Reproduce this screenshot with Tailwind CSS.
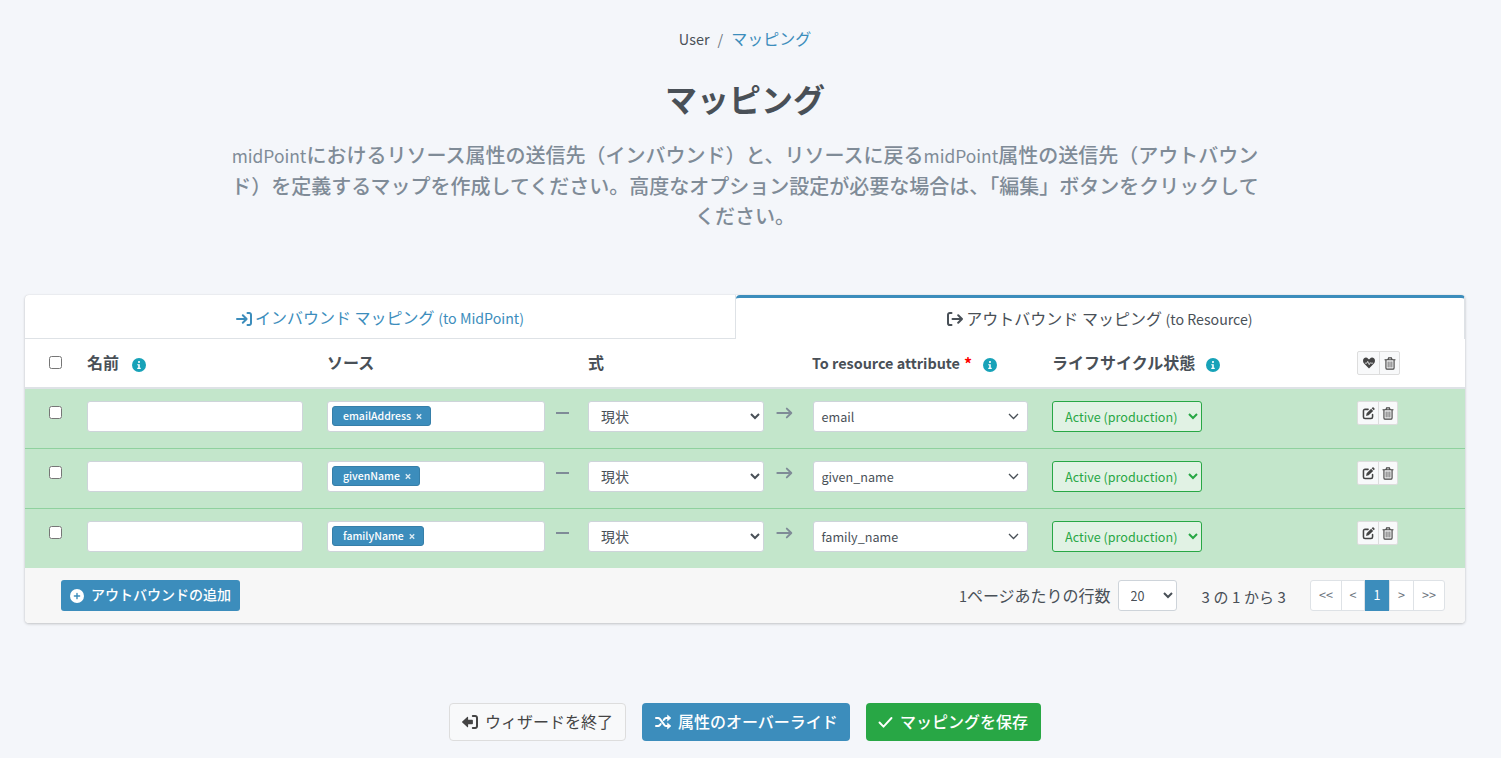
<!DOCTYPE html>
<html lang="ja">
<head>
<meta charset="utf-8">
<title>マッピング</title>
<script src="https://cdn.jsdelivr.net/npm/@tailwindcss/browser@4"></script>
</head>
<body class="h-[758px] overflow-hidden bg-[#f4f6fa] font-['Noto_Sans_CJK_JP',sans-serif] text-base leading-6 text-[#495057]">
<svg class="hidden">
  <symbol id="info" viewBox="0 0 16 16"><circle cx="8" cy="8" r="8" fill="#17a2b8"/><circle cx="8" cy="4.6" r="1.2" fill="#fff"/><path d="M6 7h2.9v4.2H10v1.3H6v-1.3h1.1V8.3H6z" fill="#fff"/></symbol>
  <symbol id="trash" viewBox="0 0 14 16"><path d="M.8 3.400h12.400M4.400 3.200l.9-2.200h3.400l.9 2.200M2 3.600v9.800c0 .9.700 1.600 1.600 1.600h6.800c.9 0 1.600-.7 1.600-1.600V3.600" fill="none" stroke="currentColor" stroke-width="1.400" stroke-linecap="round"/><path d="M4.700 6v6.400M7 6v6.400M9.300 6v6.400" fill="none" stroke="currentColor" stroke-width="1" stroke-linecap="round"/></symbol>
  <symbol id="edit" viewBox="0 0 16 16"><path d="M7.500 2.900H3.700A1.900 1.900 0 0 0 1.800 4.800v7.400a1.900 1.900 0 0 0 1.900 1.900h7.400a1.900 1.900 0 0 0 1.900-1.900V9.300" fill="none" stroke="currentColor" stroke-width="1.900" stroke-linecap="round"/><path d="M5 11l.7-3.200 5.500-5.500 2.500 2.500-5.500 5.500zM11.900 1.600l.8-.8c.5-.5 1.200-.5 1.700 0l.8.8c.5.500.5 1.200 0 1.700l-.8.8z" fill="currentColor"/></symbol>
  <symbol id="heart" viewBox="0 0 16 16"><path d="M8 15.200L1.400 8.500C-.5 6.500-.4 3.200 1.400 1.700c1.700-1.400 4-1.100 5.500.5l1.100 1.100 1.100-1.100c1.500-1.600 3.800-1.900 5.500-.5 1.800 1.500 1.900 4.800 0 6.800z" fill="currentColor"/><path d="M2.500 8.200h2.700l1.100-2.400 2 4.400 1.400-2.700.5.700h3.300" fill="none" stroke="#f8f9fa" stroke-width="1"/></symbol>
  <symbol id="arrow" viewBox="0 0 16 12"><path d="M.8 6h13.800M10.300 1.600L14.800 6l-4.500 4.400" fill="none" stroke="currentColor" stroke-width="1.900" stroke-linecap="round" stroke-linejoin="round"/></symbol>
</svg>

<nav class="flex h-6 mt-[27px] items-center justify-center pr-[11px] whitespace-nowrap">
  <span class="text-[14.4px]">User</span><span class="px-2 text-[14.4px] text-[#6c757d]">/</span><span class="pb-0.5 text-[#3c8dbc]">マッピング</span>
</nav>
<h1 class="mt-[27px] pr-[11px] text-center text-[32px] leading-10 font-bold">マッピング</h1>
<p class="mt-[22px] h-[90px] pr-[11px] text-center text-xl leading-[30px] font-medium whitespace-nowrap text-[#7f8b97]"><span class="text-[17.4px] font-normal">midPoint</span>におけるリソース属性の送信先（インバウンド）と、リソースに戻る<span class="text-[17.4px] font-normal">midPoint</span>属性の送信先（アウトバウン<br>ド）を定義するマップを作成してください。高度なオプション設定が必要な場合は、「編集」ボタンをクリックして<br>ください。</p>

<main class="mt-[65px] ml-[25px] w-[1440px] rounded bg-white shadow-[0_0_1px_rgba(0,0,0,.125),0_1px_3px_rgba(0,0,0,.2)]">
  <div class="flex h-11 whitespace-nowrap">
    <div class="flex w-[711px] items-center justify-center border-r border-b border-[#dee2e6] pt-1 text-[#3c8dbc]">
      <svg class="mr-[3px] h-4 w-4" viewBox="0 0 16 16" fill="none" stroke="currentColor" stroke-width="2" stroke-linecap="round" stroke-linejoin="round"><path d="M1 8h9.500M6.800 4.200L10.600 8l-3.800 3.800M11.500 2h1.700A1.800 1.800 0 0 1 15 3.800v8.400a1.800 1.800 0 0 1-1.800 1.800h-1.700"/></svg>
      <span class="pb-0.5">インバウンド マッピング <span class="text-[14.2px]">(to MidPoint)</span></span>
    </div>
    <div class="flex flex-1 items-center justify-center rounded-t border-t-3 border-r border-t-[#3c8dbc] border-r-[#dee2e6]">
      <svg class="mr-[3px] h-4 w-4" viewBox="0 0 16 16" fill="none" stroke="currentColor" stroke-width="2" stroke-linecap="round" stroke-linejoin="round"><path d="M5.500 8H15M11.200 4.200L15 8l-3.800 3.800M4.500 2H2.800A1.800 1.800 0 0 0 1 3.800v8.400A1.800 1.800 0 0 0 2.800 14h1.700"/></svg>
      <span class="pb-px">アウトバウンド マッピング <span class="text-[14.2px]">(to Resource)</span></span>
    </div>
  </div>

  <div class="grid h-[50px] grid-cols-[62px_240px_261px_224px_240px_305px_1fr] items-center border-b-2 border-[#dee2e6] font-bold whitespace-nowrap">
    <input type="checkbox" class="mb-0.5 ml-6 h-[13px] w-[13px]">
    <div class="flex items-center"><span class="pb-0.5">名前</span><svg class="mt-1 ml-[13px] h-[14px] w-[14px]"><use href="#info"/></svg></div>
    <div class="pb-0.5">ソース</div>
    <div class="pb-0.5">式</div>
    <div class="flex items-center text-[14.4px]">To resource attribute<span class="ml-1 text-base text-[#f00]">*</span><svg class="mt-1 ml-[11px] h-[14px] w-[14px]"><use href="#info"/></svg></div>
    <div class="flex items-center"><span class="pb-0.5">ライフサイクル状態</span><svg class="mt-1 ml-[11px] h-[14px] w-[14px]"><use href="#info"/></svg></div>
    <div class="flex h-6 w-[43px] divide-x divide-[#ddd] rounded-xs border border-[#ddd] bg-[#f8f9fa] text-[#444]">
      <div class="flex w-[22px] items-center justify-center"><svg class="h-3 w-3"><use href="#heart"/></svg></div>
      <div class="flex flex-1 items-center justify-center"><svg class="h-[13px] w-[12px]"><use href="#trash"/></svg></div>
    </div>
  </div>

  <div id="rows" class="divide-y divide-[#8fd19e] bg-[#c3e6cb]"></div>

  <div class="flex h-[55px] items-start rounded-b bg-[#f7f7f7] pt-3 pr-5 pl-9 whitespace-nowrap">
    <button class="flex h-[31px] w-[179px] items-center rounded-[3px] bg-[#3c8dbc] pl-[9px] text-sm font-medium text-white">
      <svg class="mr-[7px] h-[14px] w-[14px]" viewBox="0 0 16 16"><circle cx="8" cy="8" r="8" fill="#fff"/><path d="M8 5v6M5 8h6" stroke="#3c8dbc" stroke-width="1.600" stroke-linecap="round"/></svg><span class="pb-1">アウトバウンドの追加</span></button>
    <div class="ml-auto flex items-start">
      <span class="mt-[3px]"><span class="text-[14.4px]">1</span>ページあたりの行数</span>
      <select class="mr-px ml-[7px] h-[31px] w-[59px] rounded-[3px] border border-[#ced4da] bg-white pl-2 text-[12.6px]"><option>20</option></select>
      <span class="mt-[5px] ml-6 text-[15px] tracking-[.1px]">3 の 1 から 3</span>
      <div class="ml-6 flex h-[31px] w-[135px] divide-x divide-[#dee2e6] rounded-[3px] border border-[#dee2e6] bg-white text-[12.6px] leading-7 text-[#6c757d]">
        <span class="w-[31px] text-center">&lt;&lt;</span><span class="w-[23px] text-center">&lt;</span><span class="-my-px w-[25px] bg-[#3c8dbc] pt-px text-center text-white">1</span><span class="w-6 text-center">&gt;</span><span class="flex-1 text-center">&gt;&gt;</span>
      </div>
    </div>
  </div>
</main>

<footer class="mt-20 flex h-[38px] gap-4 pl-[449px] font-medium whitespace-nowrap">
  <button class="flex w-[177px] items-center rounded border border-[#ddd] bg-[#f8f9fa] pl-3 font-normal text-[#444]">
    <svg class="mr-[7px] h-4 w-4" viewBox="0 0 16 16"><path d="M.3 7.400L5.200 2.900c.4-.4.9-.1.900.4v2.500h4c.5 0 .8.3.8.800v2.800c0 .5-.3.8-.8.800h-4v2.500c0 .5-.5.8-.9.400L.3 8.600c-.4-.4-.4-.8 0-1.200z" fill="currentColor"/><path d="M10.800 2h2.400A1.800 1.800 0 0 1 15 3.800v8.400a1.800 1.800 0 0 1-1.800 1.800h-2.400" fill="none" stroke="currentColor" stroke-width="2" stroke-linecap="round"/></svg><span class="pb-0.5">ウィザードを終了</span></button>
  <button class="flex w-[208px] items-center rounded bg-[#3c8dbc] pl-[13px] text-white">
    <svg class="mr-[7px] h-4 w-4" viewBox="0 0 16 16"><path d="M1 4h2.200c.6 0 1.100.3 1.500.7l5 6.600c.4.500.9.700 1.500.700H13M1 12h2.200c.6 0 1.100-.3 1.500-.7l1-1.300M8.700 6l1-1.300c.4-.4.9-.7 1.500-.7H13" fill="none" stroke="currentColor" stroke-width="2" stroke-linecap="round"/><path d="M12.500 1v6L16 4zM12.500 9v6l3.500-3z" fill="currentColor" stroke="currentColor" stroke-width=".5" stroke-linejoin="round"/></svg><span class="pb-0.5">属性のオーバーライド</span></button>
  <button class="flex w-[175px] items-center rounded bg-[#28a745] pl-3 text-white">
    <svg class="mr-[7px] h-4 w-[15px]" viewBox="0 0 15 16"><path d="M1.500 8.500l4 4.200L13.500 4" fill="none" stroke="currentColor" stroke-width="1.900" stroke-linecap="round" stroke-linejoin="round"/></svg><span class="pb-0.5">マッピングを保存</span></button>
</footer>

<template id="row">
  <div class="grid h-[60px] last:h-[59px] grid-cols-[62px_240px_261px_224px_240px_305px_1fr] items-start pt-3 whitespace-nowrap">
    <input type="checkbox" class="mt-[5px] ml-6 h-[13px] w-[13px]">
    <input type="text" class="h-[31px] w-[216px] rounded-[3px] border border-[#ced4da] bg-white">
    <div class="flex">
      <div class="flex h-[31px] w-[218px] items-start rounded-[3px] border border-[#ced4da] bg-white pt-1 pl-1">
        <span class="flex h-5 items-center rounded-[3px] border border-[#367fa9] bg-[#3c8dbc] pr-2 pl-[10px] text-[10.500px] font-medium text-white"><span data-f="source"></span>
          <svg class="mt-px ml-[5px] h-[7px] w-[6px]" viewBox="0 0 6 7"><path d="M.8 1.300l4.400 4.400M5.200 1.300L.8 5.700" stroke="#d8e8f1" stroke-width="1.500"/></svg></span>
      </div>
      <span class="mt-[11px] ml-[11px] h-[2px] w-[13px] bg-[#7f8b97]"></span>
    </div>
    <div class="flex">
      <select class="h-[31px] w-[176px] rounded-[3px] border border-[#ced4da] bg-white pb-0.5 pl-2 text-sm"><option>現状</option></select>
      <svg class="mt-[6px] ml-3 h-3 w-[17px] text-[#7f8b97]"><use href="#arrow"/></svg>
    </div>
    <div class="ml-px flex h-[31px] w-[215px] items-center justify-between rounded-[3px] border border-[#ced4da] bg-white pr-2 pl-[7.500px] text-[12.600px]"><span class="pt-px" data-f="attr"></span>
      <svg class="h-[7px] w-[11px]" viewBox="0 0 11 7"><path d="M1 1l4.500 4.500L10 1" fill="none" stroke="currentColor" stroke-width="1.300"/></svg></div>
    <select class="h-[31px] w-[150px] rounded-[3px] border border-[#28a745] bg-[#e1f2e4] pl-2 text-[12.600px] text-[#28a745]"><option>Active (production)</option></select>
    <div class="flex h-6 w-[41px] divide-x divide-[#ddd] rounded-xs border border-[#ddd] bg-[#f8f9fa] text-[#444]">
      <div class="flex w-[21px] items-center justify-center"><svg class="h-[13px] w-[13px]"><use href="#edit"/></svg></div>
      <div class="flex flex-1 items-center justify-center"><svg class="h-[13px] w-[12px]"><use href="#trash"/></svg></div>
    </div>
  </div>
</template>
<script>
  const rows = [['emailAddress', 'email'], ['givenName', 'given_name'], ['familyName', 'family_name']];
  for (const [source, attr] of rows) {
    const row = document.getElementById('row').content.cloneNode(true);
    row.querySelector('[data-f=source]').textContent = source;
    row.querySelector('[data-f=attr]').textContent = attr;
    document.getElementById('rows').append(row);
  }
</script>
</body>
</html>
